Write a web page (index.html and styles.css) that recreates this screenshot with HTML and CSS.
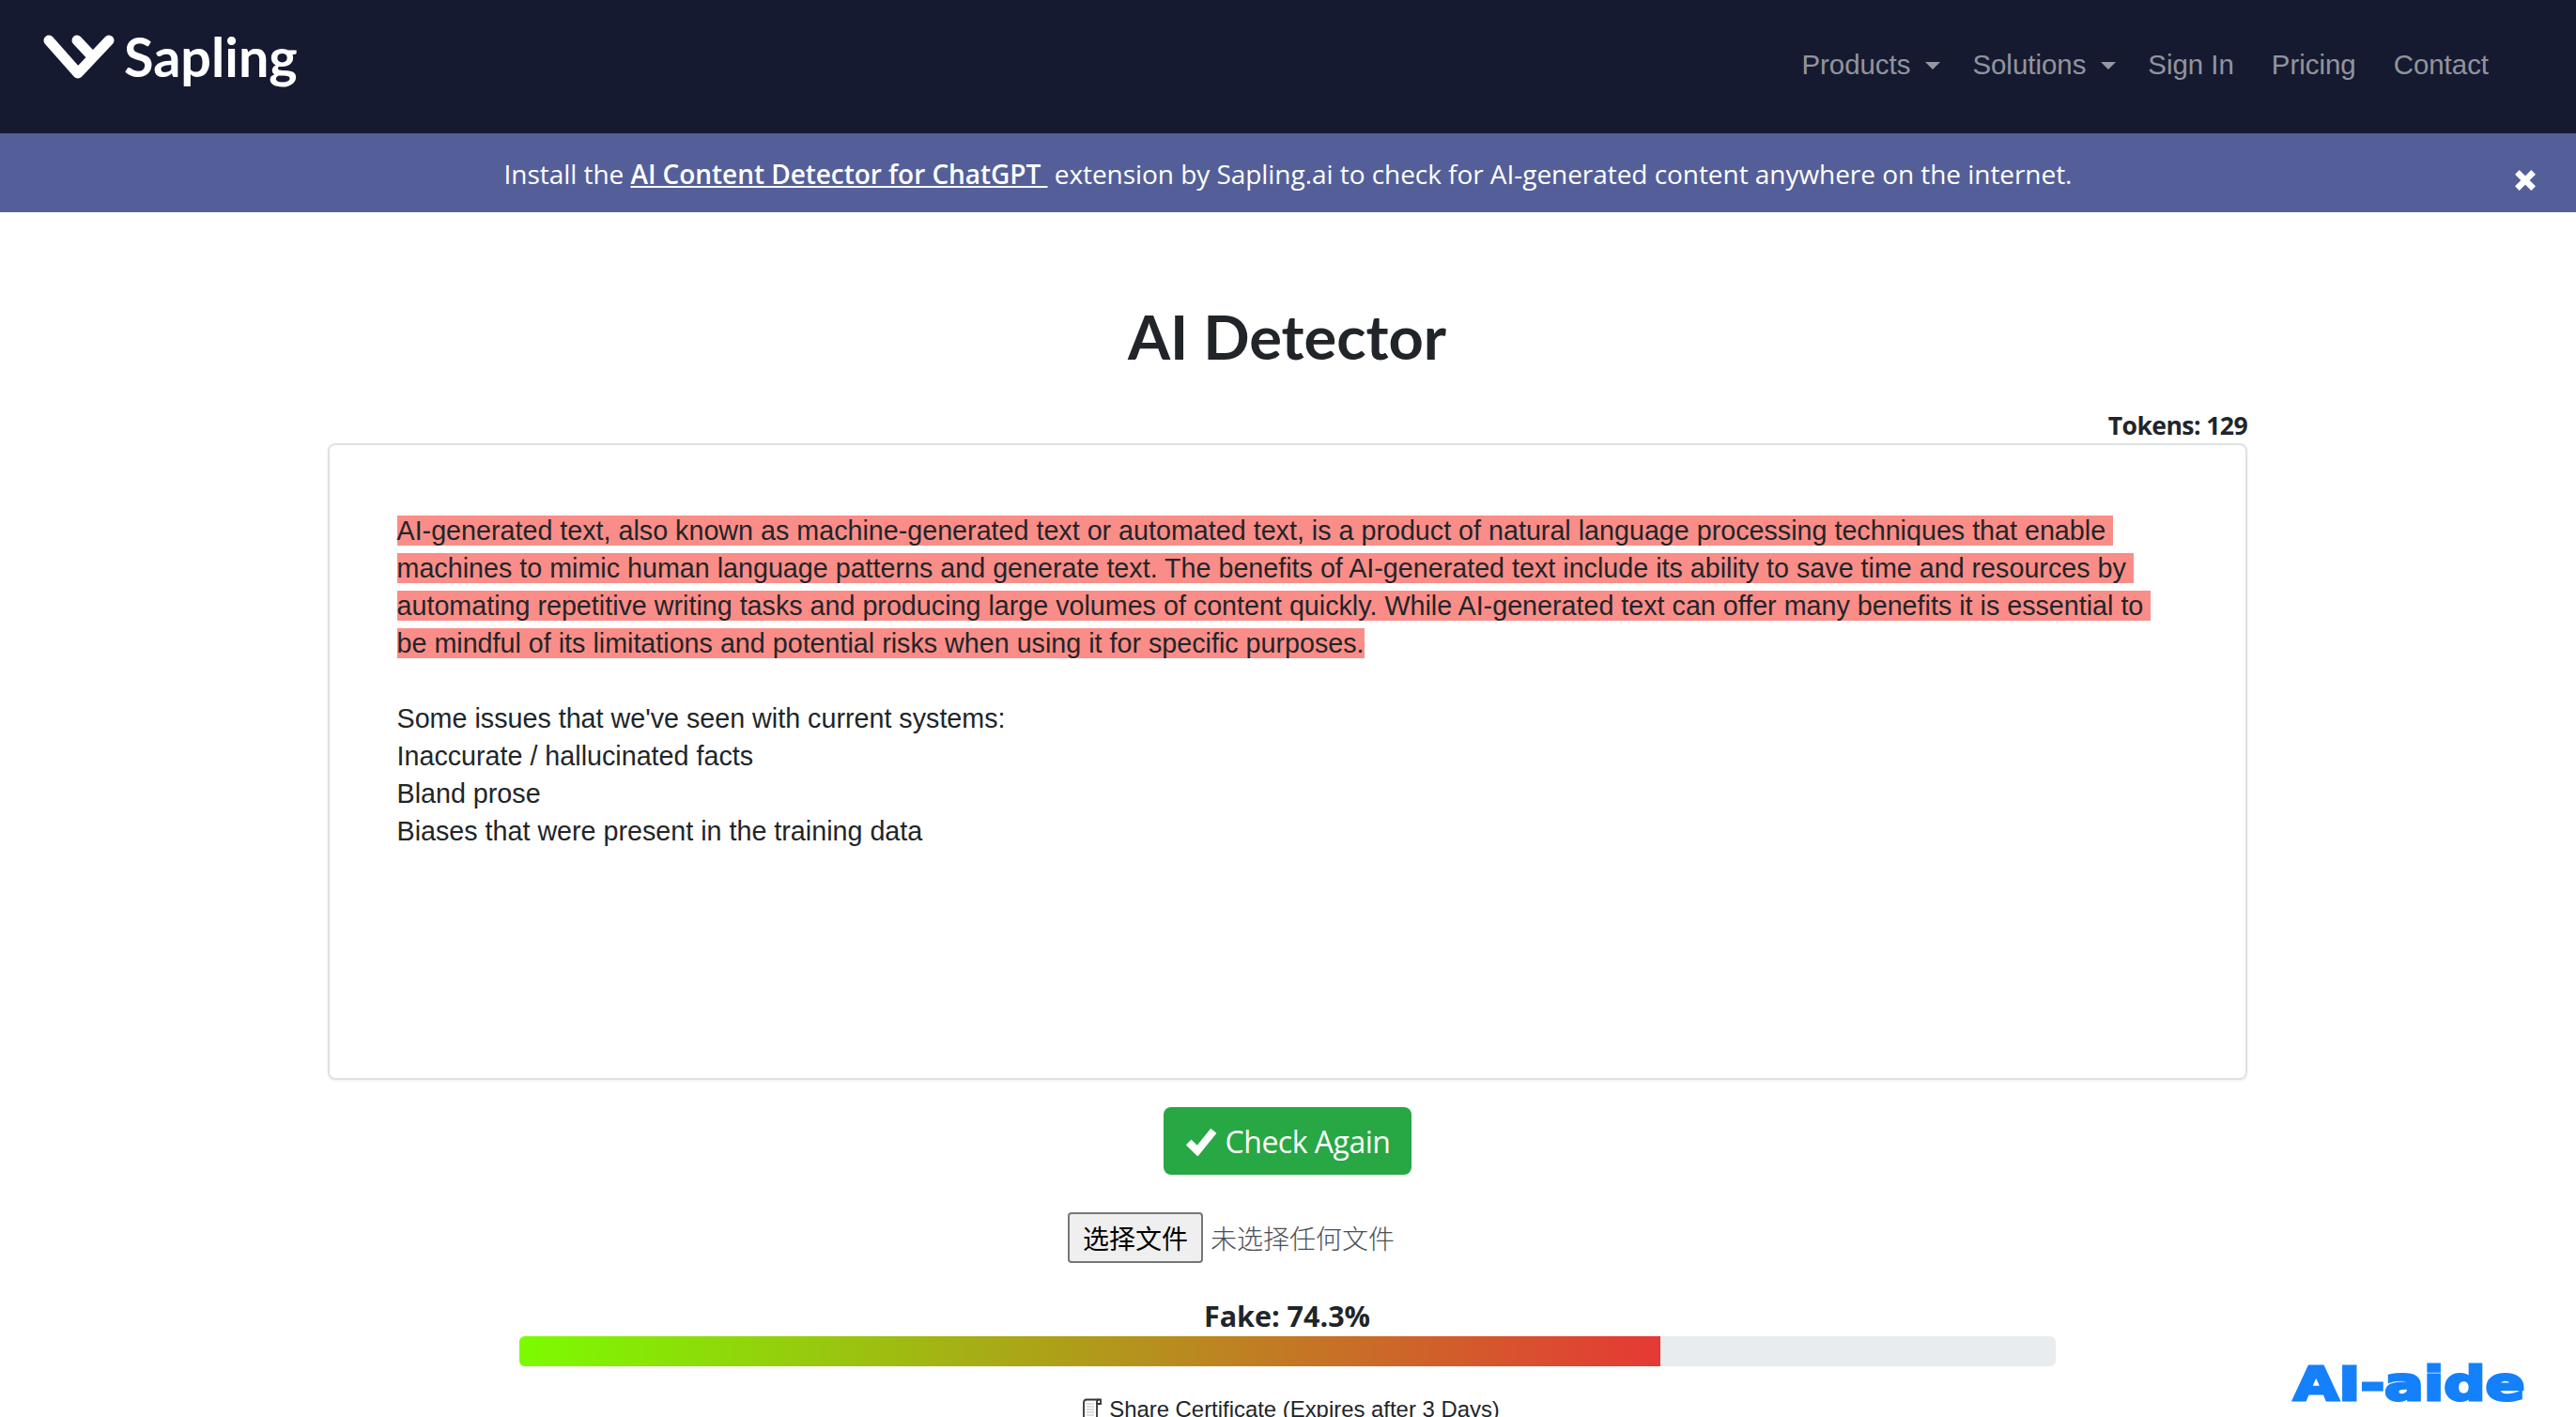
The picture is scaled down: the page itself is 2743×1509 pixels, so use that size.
FILE: index.html
```html
<!DOCTYPE html>
<html lang="zh-CN">
<head>
<meta charset="utf-8">
<title>AI Detector - Sapling</title>
<link rel="stylesheet" href="styles.css">
</head>
<body>
<header class="topbar">
  <a class="brand" href="#">
    <svg class="brand-mark" viewBox="0 0 76 50" aria-hidden="true">
      <path d="M6 6 L37 41 L70 6" class="mark-line"/>
      <path d="M36 6 L51 22" class="mark-line"/>
    </svg>
    <span class="brand-name">Sapling</span>
  </a>
  <nav class="nav">
    <a class="nav-link has-caret" href="#">Products</a>
    <a class="nav-link has-caret" href="#">Solutions</a>
    <a class="nav-link" href="#">Sign In</a>
    <a class="nav-link" href="#">Pricing</a>
    <a class="nav-link" href="#">Contact</a>
  </nav>
</header>
<div class="banner">
  <p class="banner-text">Install the <a href="#">AI Content Detector for ChatGPT&nbsp;</a> extension by Sapling.ai to check for AI-generated content anywhere on the internet.</p>
  <svg class="banner-close" viewBox="0 0 24 24" aria-hidden="true"><path d="M4 4 L20 20 M20 4 L4 20"/></svg>
</div>
<main class="main">
  <h1 class="title">AI Detector</h1>
  <div class="tokens">Tokens: 129</div>
  <section class="editor">
    <p class="para"><mark class="hl">AI-generated text, also known as machine-generated text or automated text, is a product of natural language processing techniques that enable machines to mimic human language patterns and generate text. The benefits of AI-generated text include its ability to save time and resources by automating repetitive writing tasks and producing large volumes of content quickly. While AI-generated text can offer many benefits it is essential to be mindful of its limitations and potential risks when using it for specific purposes.</mark></p>
    <p class="para">Some issues that we've seen with current systems:<br>Inaccurate / hallucinated facts<br>Bland prose<br>Biases that were present in the training data</p>
  </section>
  <button class="check-btn" type="button">
    <svg class="check-icon" viewBox="0 0 26 24" aria-hidden="true"><path d="M3 13 L10 20 L23 4"/></svg>
    Check Again
  </button>
  <div class="file-row">
    <button class="file-btn" type="button">选择文件</button>
    <span class="file-label">未选择任何文件</span>
  </div>
  <div class="score">Fake: 74.3%</div>
  <div class="progress"><div class="progress-fill" style="width:74.3%"></div></div>
  <div class="share">
    <svg class="share-icon" viewBox="0 0 25 30" aria-hidden="true">
      <path d="M6 27 V5 Q6 1.5 9 1.5 H24 V6 H20 V27 Q20 29 18 29 H1 Q1 27 3 27 H16"/>
      <path d="M20 6 V4 Q20 1.5 22 1.5"/>
      <path class="share-lines" d="M9 6 H17 M9 9 H17 M9 12 H17 M9 15 H17 M9 18 H17 M9 21 H17 M9 24 H17"/>
    </svg>
    <span>Share Certificate (Expires after 3 Days)</span>
  </div>
</main>
<div class="watermark">AI-aide</div>
</body>
</html>
```

FILE: styles.css
```css
* { box-sizing: border-box; }
html, body { margin: 0; height: 1509px; overflow: hidden; background: #fff; }
body { position: relative; font-family: "Open Sans", "Noto Sans CJK SC", sans-serif; color: #212529; }
p { margin: 0; }

.topbar {
  height: 142px; background: #151a30; display: flex; align-items: center;
  justify-content: space-between; padding: 0 93px 0 46px;
}
.brand { display: flex; align-items: center; gap: 10px; text-decoration: none; margin-top: -22px; }
.brand-mark { width: 76px; height: 50px; margin-top: 4px; }
.mark-line { fill: none; stroke: #fff; stroke-width: 11; stroke-linecap: round; stroke-linejoin: round; }
.brand-name { font-family: Lato, sans-serif; font-weight: 700; font-size: 57.5px; line-height: 1; color: #fff; }
.nav { display: flex; align-items: center; gap: 40px; margin-top: -5px; }
.nav-link { font-family: "Liberation Sans", sans-serif; font-size: 29.4px; line-height: 40px; color: rgba(255,255,255,.55); text-decoration: none; }
.has-caret { margin-right: -6px; }
.has-caret::after {
  content: ""; display: inline-block; margin-left: 16px; vertical-align: 5px;
  border-top: 8px solid currentColor; border-left: 8px solid transparent; border-right: 8px solid transparent;
}
.banner {
  height: 84px; background: #545f99; position: relative; display: flex;
  align-items: center; justify-content: center; color: #fff;
}
.banner-text { font-size: 28px; line-height: 40px; margin-top: 1px; letter-spacing: -.05px; }
.banner-text a { color: #fff; font-weight: 600; }
.banner-close {
  position: absolute; right: 41px; top: 37px; width: 26px; height: 26px;
  fill: none; stroke: #fff; stroke-width: 6;
}

.main { display: flex; flex-direction: column; align-items: center; padding-right: 2px; }
.title { font-family: Lato, sans-serif; font-weight: 700; font-size: 65px; line-height: 82px; margin: 91px 0 0; }
.tokens { align-self: flex-end; margin: 36px 348px 0 0; font-size: 26.6px; line-height: 37px; font-weight: 700; letter-spacing: -.6px; }
.editor {
  width: 2044px; height: 678px; border: 2px solid #dee2e6; border-radius: 8px;
  padding: 71px 72px; box-shadow: 0 1px 3px rgba(0,0,0,.08);
  font-family: "Liberation Sans", sans-serif; font-size: 28.7px; line-height: 40px;
}
.para + .para { margin-top: 40px; }
.hl { background: #fa8d88; color: #212529; white-space: pre-wrap; }
.check-btn {
  margin-top: 29px; width: 264px; height: 72px; border: 0; border-radius: 8px; background: #28a745;
  color: #fff; font-family: "Open Sans", sans-serif; font-size: 32px; display: flex; align-items: center;
  justify-content: center; gap: 8px; letter-spacing: -.5px;
}
.check-icon { width: 36px; height: 32px; fill: none; stroke: #fff; stroke-width: 6; }
.file-row { display: flex; align-items: center; gap: 8px; margin-top: 40px; height: 54px; width: 467px; }
.file-btn {
  width: 144px; height: 54px; background: #efefef; border: 2px solid #767676; border-radius: 4px; padding: 0;
  font-family: "Noto Sans CJK SC", sans-serif; font-size: 28px; color: #000;
}
.file-label { font-family: "Noto Sans CJK SC", sans-serif; font-size: 28px; color: #4a4f55; font-weight: 300; white-space: nowrap; }
.score { font-size: 30.5px; line-height: 40px; font-weight: 700; margin-top: 36px; }
.progress { width: 1636px; height: 32px; background: #e9ecef; border-radius: 6px; overflow: hidden; margin-top: 2px; }
.progress-fill { height: 100%; background: linear-gradient(90deg, #7cfc00, #e53935); }
.share { display: flex; align-items: center; gap: 8px; margin: 31px 0 0 4px; font-family: "Liberation Sans", sans-serif; font-size: 23.9px; line-height: 30px; color: #212529; }
.share-icon { width: 25px; height: 30px; fill: none; stroke: #333; stroke-width: 1.8; transform: translateY(3px); }
.share-lines { stroke: #bbb; stroke-width: 1; }
.watermark {
  position: absolute; right: 54px; bottom: 10px; font-family: "DejaVu Sans", sans-serif; font-weight: 700;
  font-size: 50px; line-height: 1; color: #1480fb; -webkit-text-stroke: 3px #1480fb;
  transform: scaleX(1.24); transform-origin: right center;
}
```
